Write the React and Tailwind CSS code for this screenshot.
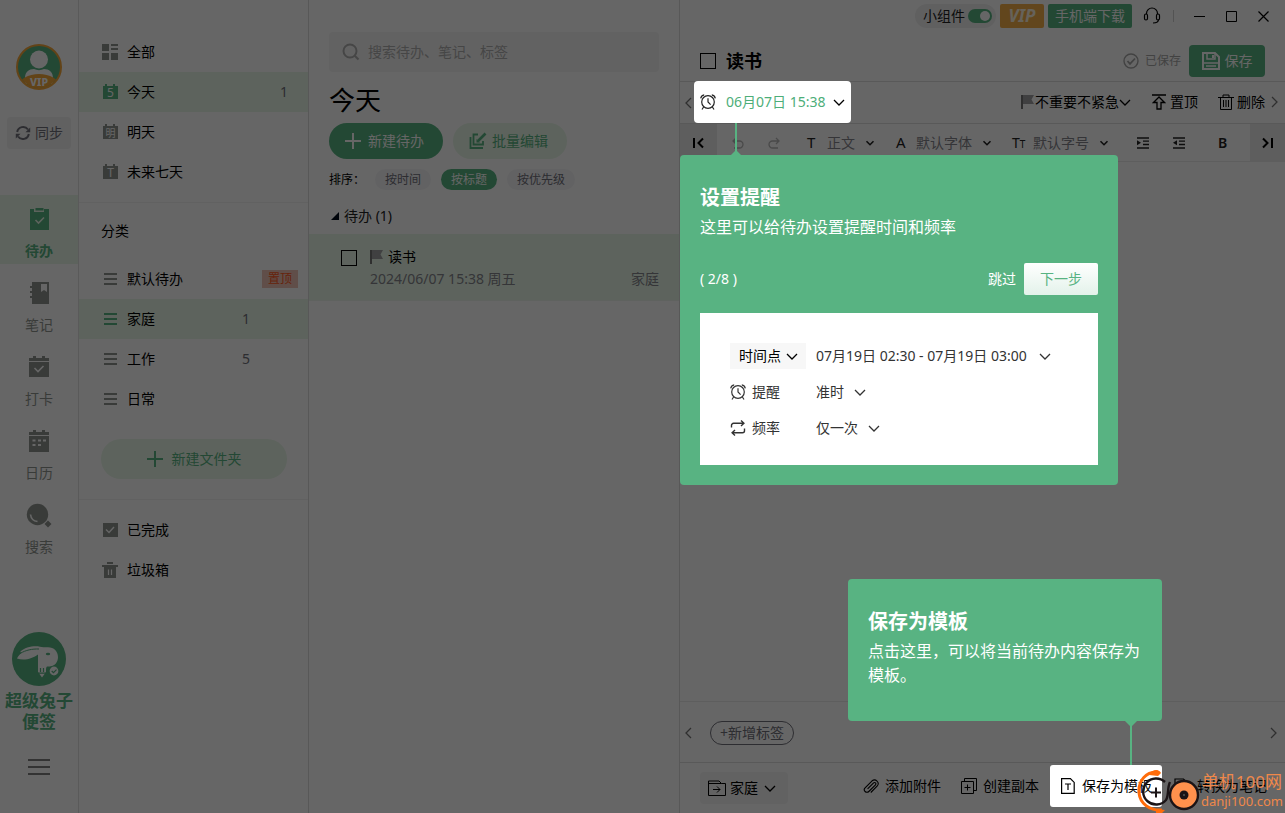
import React from "react";

const FONT = 'font-["Noto_Sans","Noto_Sans_CJK_SC",sans-serif]';

/* ---------- icons ---------- */

function Svg({ w, h, className = "", children, ...rest }) {
  return (
    <svg
      width={w}
      height={h}
      viewBox={`0 0 ${w} ${h}`}
      fill="none"
      aria-hidden="true"
      className={`shrink-0 ${className}`}
      {...rest}
    >
      {children}
    </svg>
  );
}

const Chevron = ({ className = "" }) => (
  <Svg w={12} h={12} className={className}>
    <path d="M1 4l5 5 5-5" stroke="currentColor" strokeWidth="1.3" />
  </Svg>
);

const SmallChevron = ({ className = "" }) => (
  <Svg w={10} h={10} className={className}>
    <path d="M1.5 3.2L5 6.7l3.500-3.500" stroke="currentColor" strokeWidth="1.6" />
  </Svg>
);

const ArrowLeft = () => (
  <Svg w={7} h={12}>
    <path d="M6 1L1 6l5 5" stroke="currentColor" strokeWidth="1.300" />
  </Svg>
);

const ArrowRight = () => (
  <Svg w={7} h={12}>
    <path d="M1 1l5 5-5 5" stroke="currentColor" strokeWidth="1.300" />
  </Svg>
);

const Plus = () => (
  <Svg w={16} h={16}>
    <path d="M8 0v16M0 8h16" stroke="currentColor" strokeWidth="2" />
  </Svg>
);

const Flag = () => (
  <Svg w={14} h={14}>
    <path d="M0 0h2v14H0z" fill="#777" />
    <path d="M2 0h11l-2.500 4.500L13 9H2z" fill="#a0a0a4" />
  </Svg>
);

const Alarm = () => (
  <Svg w={16} h={16} stroke="currentColor">
    <circle cx="8" cy="8" r="6.300" strokeWidth="1.200" />
    <path d="M8 4.200V8l2.600 2.600" strokeWidth="1.200" />
    <path d="M.7 4.300C1 2.300 2.200 1 4.200.8M15.300 4.300C15 2.300 13.800 1 11.800.8M3.600 13L2 15.500M12.400 13l1.600 2.500" strokeWidth="1.200" />
  </Svg>
);

const Repeat = () => (
  <Svg w={16} h={16} stroke="currentColor" strokeWidth="1.400">
    <path d="M1.500 7.500V5.300a2 2 0 012-2h10.300M11 .6l2.900 2.700L11 6M14.500 8.500v2.200a2 2 0 01-2 2H2.200M5 10l-2.900 2.700L5 15.400" />
  </Svg>
);

const Avatar = () => (
  <Svg w={46} h={46}>
    <defs>
      <clipPath id="avatar-clip">
        <circle cx="23" cy="23" r="21" />
      </clipPath>
    </defs>
    <circle cx="23" cy="23" r="22" fill="#58b382" stroke="#f6a83a" strokeWidth="2" />
    <g clipPath="url(#avatar-clip)">
      <circle cx="23" cy="15.500" r="9" fill="#fff" />
      <path d="M9 40v-6c0-6 4-9 9-9 3 1.500 7 1.500 10 0 5 0 9 3 9 9v6z" fill="#fff" />
      <ellipse cx="23" cy="42" rx="20" ry="12" fill="#f6a83a" />
    </g>
    <text x="23" y="41.500" textAnchor="middle" fill="#fff" fontSize="10.500" fontWeight="800" fontFamily="Noto Sans, sans-serif">
      VIP
    </text>
  </Svg>
);

const Sync = () => (
  <Svg w={16} h={16}>
    <path d="M2.200 7A6 6 0 0113 4.500M13.800 9A6 6 0 013 11.500" stroke="currentColor" strokeWidth="2" />
    <path d="M15.200 2.500v4.700h-4.700zM.8 13.500V8.800h4.700z" fill="currentColor" />
  </Svg>
);

const RailTodo = () => (
  <Svg w={20} h={24}>
    <path d="M1 2h4v3h10V2h5v21H1z" fill="currentColor" />
    <path d="M6.500 1h8v2.500h-8z" fill="currentColor" />
    <path d="M6.500 13l3 3 5.500-5.500" stroke="#e8f8e8" strokeWidth="1.600" />
  </Svg>
);

const RailNote = () => (
  <Svg w={20} h={24}>
    <path d="M3 1h17v22H3z" fill="currentColor" />
    <path d="M1 5h3v2H1zM1 10h3v2H1zM1 15h3v2H1z" fill="currentColor" />
    <path d="M12 3h6v8l-3-2-3 2z" fill="#fff" />
  </Svg>
);

const RailCheckin = () => (
  <Svg w={20} h={24}>
    <path d="M0 3h4V1h3v2h6V1h3v2h4v3H0zM0 7h20v15H0z" fill="currentColor" />
    <path d="M5.500 13l3.500 3.500 5.500-5.500" stroke="#fff" strokeWidth="1.600" />
  </Svg>
);

const RailCalendar = () => (
  <Svg w={20} h={24}>
    <path d="M0 3h4V1h3v2h6V1h3v2h4v3H0zM0 7h20v16H0z" fill="currentColor" />
    <path d="M3.500 10.500h3v2h-3zM9 10.500h3v2H9zM14 10.500h3v2h-3zM3.500 15h3v2h-3zM9 15h3v2H9z" fill="#fff" />
  </Svg>
);

const RailSearch = () => (
  <Svg w={26} h={26}>
    <circle cx="11.500" cy="11.500" r="10.700" fill="currentColor" />
    <path d="M22 17.500l3.500 3.500-3.500 3.500-3.500-3.500z" fill="currentColor" />
    <path d="M4.500 11.500c.5 4 3 6.500 7 7" stroke="#fff" strokeWidth="1.600" />
  </Svg>
);

const RabbitLogo = () => (
  <Svg w={54} h={54}>
    <circle cx="27" cy="27" r="27" fill="#58b382" />
    <path
      d="M5 26.500C6 24 8 22.200 10 20.500c-1 .2-2-.2-1.500-1C13 15.500 21 13.500 28 14.700c3 .5 5 .7 8 .6 6 0 10 4 10 10 0 5-3.500 9-8 9.300h-3c-1 1-1 2-1 5.400l-4 5.500-4-5.500V22.500c-5 4-14 6.500-21 4z"
      fill="#fff"
    />
    <path d="M8 21.500c6-3.500 12-4.700 19-4.500" stroke="#58b382" strokeWidth="1" />
    <path d="M28.500 36v4M31.500 36v4M26 41.200h8" stroke="#58b382" strokeWidth="1.200" />
    <ellipse cx="36" cy="22" rx="2.200" ry="1.200" fill="#58b382" />
    <circle cx="42" cy="39" r="5" fill="#fff" stroke="#58b382" strokeWidth="1.200" />
    <path d="M39.700 39l1.800 1.700 3-3" stroke="#58b382" strokeWidth="1.200" />
  </Svg>
);

const Menu = () => (
  <Svg w={22} h={16}>
    <path d="M0 1h22M0 8h22M0 15h22" stroke="#808080" strokeWidth="2" />
  </Svg>
);

const AllIcon = () => (
  <Svg w={16} h={16} fill="currentColor">
    <path d="M0 0h7v7H0zM0 9h7v7H0zM9 9h7v7H9zM9 0h7v2H9zM9 4h7v2H9z" fill="currentColor" />
  </Svg>
);

const DayIcon = ({ label, size }) => (
  <Svg w={16} h={16}>
    <path d="M1 2h2V0h2v2h6V0h2v2h3v13H1z" fill="currentColor" />
    <text x="8.500" y="12.500" textAnchor="middle" fontSize={size} fill="#fff" fontFamily="Noto Sans, Noto Sans CJK SC, sans-serif">
      {label}
    </text>
  </Svg>
);

const Lines = () => (
  <Svg w={16} h={16}>
    <path d="M2 3h13M2 8h13M2 13h13" stroke="currentColor" strokeWidth="2" />
  </Svg>
);

const DoneIcon = () => (
  <Svg w={16} h={16}>
    <path d="M1 1h15v14H1z" fill="currentColor" />
    <path d="M4 7.500l3 3 5-5.500" stroke="#fff" strokeWidth="1.400" />
  </Svg>
);

const BinIcon = () => (
  <Svg w={16} h={16}>
    <path d="M5 0h6v2H5zM0 3h16v2H0zM2 5h12v11H2z" fill="currentColor" />
    <path d="M6.500 7.500v5.500M9.500 7.500v5.500" stroke="#fff" strokeWidth="1.200" />
  </Svg>
);

const SearchIcon = () => (
  <Svg w={18} h={18}>
    <circle cx="8" cy="8" r="6.500" stroke="currentColor" strokeWidth="2" />
    <path d="M12.500 12.500l4 4" stroke="currentColor" strokeWidth="2.200" />
  </Svg>
);

const EditIcon = () => (
  <Svg w={18} h={18}>
    <path d="M9 2.500H4.500V12.500H14V9" stroke="currentColor" strokeWidth="1.800" />
    <path d="M1.500 5v11H14" stroke="currentColor" strokeWidth="1.800" />
    <path d="M16.500 1.500L9 9" stroke="currentColor" strokeWidth="2.600" />
    <path d="M7.500 7v3.500H11z" fill="currentColor" />
  </Svg>
);

const Headset = () => (
  <Svg w={18} h={18} stroke="currentColor" strokeWidth="1.200">
    <path d="M3.500 7V6.500a5.500 5.500 0 0111 0V7M15.500 12.500c0 2.500-2 3.500-5.500 3.500" />
    <rect x="1.500" y="7" width="3" height="6" rx="1.500" />
    <rect x="13.500" y="7" width="3" height="6" rx="1.500" />
  </Svg>
);

const SavedIcon = () => (
  <Svg w={16} h={16} stroke="currentColor" strokeWidth="1.400">
    <circle cx="8" cy="8" r="7" />
    <path d="M4.500 8l2.500 2.800 5-5.300" strokeWidth="1.800" />
  </Svg>
);

const SaveIcon = () => (
  <Svg w={18} h={18}>
    <path d="M1 1h12l4 4v12H1z" stroke="currentColor" strokeWidth="2" />
    <path d="M5 1.500V7h8V1.500M1 11h16M4 14h10" stroke="currentColor" strokeWidth="1.500" />
    <path d="M10 3h2v3h-2z" fill="currentColor" />
  </Svg>
);

const PinTop = () => (
  <Svg w={14} h={16} stroke="currentColor" strokeWidth="1.300">
    <path d="M0 1h14M7 3L1.500 8.500H5V15h4V8.500h3.500z" />
  </Svg>
);

const TrashOutline = () => (
  <Svg w={16} h={16} stroke="currentColor" strokeWidth="1">
    <path d="M0 3.500h16M5 3.500V1h6v2.500M2.500 3.500v12h11v-12M5.500 6v7M8 6v7M10.500 6v7" />
  </Svg>
);

const Undo = () => (
  <Svg w={12} h={12} stroke="currentColor" strokeWidth="1.300">
    <path d="M1 4h6.500a3.500 3.500 0 010 7H2M4 1L1 4l3 3" />
  </Svg>
);

const Redo = () => (
  <Svg w={12} h={12} stroke="currentColor" strokeWidth="1.300">
    <path d="M11 4H4.500a3.500 3.500 0 000 7H10M8 1l3 3-3 3" />
  </Svg>
);

const Indent = ({ left }) => (
  <Svg w={12} h={12}>
    <path d="M0 1h12M6 4.200h6M6 7.500h6M0 11h12" stroke="currentColor" strokeWidth="1.300" />
    <path d={left ? "M4 3.300v5L0 5.800z" : "M0 3.300v5l4-2.500z"} fill="currentColor" />
  </Svg>
);

const CollapseLeft = () => (
  <Svg w={11} h={12} stroke="currentColor" strokeWidth="2">
    <path d="M1 1v10M10 1.500L5.500 6l4.500 4.500" />
  </Svg>
);

const CollapseRight = () => (
  <Svg w={11} h={12} stroke="currentColor" strokeWidth="2">
    <path d="M10 1v10M1 1.500L5.500 6 1 10.500" />
  </Svg>
);

const FolderMove = () => (
  <Svg w={18} h={16} stroke="currentColor" strokeWidth="1">
    <path d="M.5 15.500V1h10.500l2.500 2.500h4v12zM.5 3.500h13M5 9.500h7M9 6.500l3 3-3 3" />
  </Svg>
);

const Clip = () => (
  <Svg w={16} h={16} stroke="currentColor" strokeWidth="1.100">
    <path d="M5 10.500l6-6a1.300 1.300 0 011.900 1.900l-6.700 6.700a2.600 2.600 0 01-3.700-3.700l7-7a3.700 3.700 0 015.200 5.200l-6.500 6.500" transform="translate(-.4 .4)" />
  </Svg>
);

const Copy = () => (
  <Svg w={16} h={16} stroke="currentColor" strokeWidth="1">
    <path d="M.5 3.500h12v12H.5zM3.500 3.500v-3h12v12h-3M6.500 6.500v6M3.500 9.500h6" />
  </Svg>
);

const Template = () => (
  <Svg w={14} h={16} stroke="currentColor" strokeWidth="1.200">
    <path d="M.6.6h8.800l3.800 3.800v11H.6zM4 6h6M7 6v6" />
  </Svg>
);

const Convert = () => (
  <Svg w={16} h={16} stroke="currentColor" strokeWidth="1.200">
    <path d="M1 12V1h8.500L13 4.500V7M4 6h5M4 9h3M15 11H7M9.500 8.500L7 11l2.500 2.500" />
  </Svg>
);

/* ---------- shared controls ---------- */

function Select({ label, value, width, className = "", chevron }) {
  return (
    <label className={`flex items-center ${className}`}>
      <select aria-label={label} defaultValue={value} className={`appearance-none bg-transparent p-0 outline-none ${width}`}>
        <option>{value}</option>
      </select>
      {chevron || <Chevron />}
    </label>
  );
}

/* ---------- left rail ---------- */

const RAIL = [
  { label: "待办", Icon: RailTodo, active: true },
  { label: "笔记", Icon: RailNote },
  { label: "打卡", Icon: RailCheckin },
  { label: "日历", Icon: RailCalendar },
  { label: "搜索", Icon: RailSearch },
];

function Rail() {
  return (
    <aside className="flex w-[79px] shrink-0 flex-col items-center border-r border-[#e0e0e0] pt-11 pb-[38px]">
      <button type="button" aria-label="账户">
        <Avatar />
      </button>
      <button type="button" className="mt-[27px] flex h-8 w-16 items-center justify-center gap-1 rounded bg-[#f2f2f2] text-[#70707a]">
        <Sync />
        同步
      </button>
      <nav className="mt-[46px] flex w-full flex-col gap-[5px]">
        {RAIL.map(({ label, Icon, active }) => (
          <button
            type="button"
            key={label}
            className={`flex h-[69px] w-full flex-col items-center justify-between pt-3 pb-[3px] ${
              active ? "bg-[#e8f8e8] font-bold text-[#58b382]" : "text-[#909590]"
            }`}
          >
            <Icon />
            <span>{label}</span>
          </button>
        ))}
      </nav>
      <div className="mt-auto flex flex-col items-center">
        <RabbitLogo />
        <p className="mt-1 text-center text-[17px] leading-[21px] font-bold text-[#58b382]">
          超级兔子
          <br />
          便签
        </p>
        <button type="button" aria-label="菜单" className="mt-[27px]">
          <Menu />
        </button>
      </div>
    </aside>
  );
}

/* ---------- folder sidebar ---------- */

function SideItem({ icon, label, active, activeIcon, children }) {
  return (
    <button
      type="button"
      className={`flex h-10 w-full items-center gap-[9px] pr-[10px] pl-[23px] ${active ? "bg-[#e8f8e8]" : ""}`}
    >
      <span className={activeIcon ? "text-[#58b382]" : "text-[#909590]"}>{icon}</span>
      <span>{label}</span>
      {children}
    </button>
  );
}

function Sidebar() {
  return (
    <nav className="w-[230px] shrink-0 border-r border-[#dcdcdc] pt-8">
      <SideItem icon={<AllIcon />} label="全部" />
      <SideItem icon={<DayIcon label="5" size={12} />} label="今天" active activeIcon>
        <span className="mr-[10px] ml-auto text-[#70707a]">1</span>
      </SideItem>
      <SideItem icon={<DayIcon label="明" size={10} />} label="明天" />
      <SideItem icon={<DayIcon label="T" size={12} />} label="未来七天" />
      <h2 className="mt-[10px] border-t border-[#f2f2f2] pt-[18px] pb-[18px] pl-[22px] leading-5">分类</h2>
      <SideItem icon={<Lines />} label="默认待办">
        <span className="ml-auto flex h-[18px] w-9 items-center justify-center bg-[#efc4b6] text-xs text-[#ff5722]">置顶</span>
      </SideItem>
      <SideItem icon={<Lines />} label="家庭" active activeIcon>
        <span className="mr-12 ml-auto text-[#70707a]">1</span>
      </SideItem>
      <SideItem icon={<Lines />} label="工作">
        <span className="mr-12 ml-auto text-[#70707a]">5</span>
      </SideItem>
      <SideItem icon={<Lines />} label="日常" />
      <div className="border-b border-[#f2f2f2] px-[22px] py-5 pr-[21px]">
        <button type="button" className="flex h-10 w-full items-center justify-center gap-[9px] rounded-full bg-[#e8f8e8] text-[#58b382]">
          <Plus />
          新建文件夹
        </button>
      </div>
      <div className="pt-[10px]">
        <SideItem icon={<DoneIcon />} label="已完成" />
        <SideItem icon={<BinIcon />} label="垃圾箱" />
      </div>
    </nav>
  );
}

/* ---------- todo list ---------- */

function TodoList() {
  return (
    <section className="w-[371px] shrink-0 border-r border-[#dcdcdc] pt-8">
      <div className="px-5">
        <label className="flex h-10 items-center gap-2 rounded bg-[#f5f5f5] px-[13px] text-[#b0b0b0]">
          <SearchIcon />
          <input
            type="search"
            aria-label="搜索"
            placeholder="搜索待办、笔记、标签"
            className="min-w-0 flex-1 bg-transparent outline-none placeholder:text-[#b0b0b0]"
          />
        </label>
        <h1 className="mt-3 text-[26px] leading-8">今天</h1>
        <div className="mt-[7px] flex gap-[10px]">
          <button type="button" className="flex h-9 w-[114px] items-center gap-[7px] rounded-full bg-[#58b382] pl-4 text-white">
            <Plus />
            新建待办
          </button>
          <button type="button" className="flex h-9 w-[114px] items-center gap-[5px] rounded-full bg-[#e8f8e8] pl-4 text-[#58b382]">
            <EditIcon />
            批量编辑
          </button>
        </div>
        <div className="mt-[10px] flex items-center gap-[10px] text-xs">
          <span className="w-9">排序：</span>
          <button type="button" className="h-[21px] rounded-full bg-[#f5f5f8] px-[10px] text-[#70707a]">按时间</button>
          <button type="button" className="h-[21px] rounded-full bg-[#58b382] px-[10px] text-white">按标题</button>
          <button type="button" className="h-[21px] rounded-full bg-[#f5f5f8] px-[10px] text-[#70707a]">按优先级</button>
        </div>
        <button type="button" className="mt-4 flex h-[20px] items-center gap-[5px] pl-[2px] leading-5 text-[#222]">
          <Svg w={8} h={8}>
            <path d="M8 0v8H0z" fill="#000c1a" />
          </Svg>
          待办 (1)
        </button>
      </div>
      <article className="mt-2 flex h-[67px] border-b border-[#eef4ee] bg-[#e8f8e8] pt-3 pr-5 pl-8">
        <input type="checkbox" aria-label="完成 读书" className="mt-1 size-4 appearance-none border border-black" />
        <div className="ml-[13px] flex-1">
          <h3 className="flex items-center gap-1 leading-[22px]">
            <Flag />
            读书
          </h3>
          <p className="flex justify-between leading-[22px] text-[#85858c]">
            <time>2024/06/07 15:38 周五</time>
            <span>家庭</span>
          </p>
        </div>
      </article>
    </section>
  );
}

/* ---------- tour ---------- */

function ReminderTour() {
  return (
    <div role="dialog" aria-label="设置提醒" className="absolute top-full left-[-14px] w-[438px] pt-8">
      <span className="absolute top-0 left-[55px] h-8 w-[2px] bg-[#58b382]" />
      <Svg w={12} h={6} className="absolute top-[27px] left-[50px]">
        <path d="M0 6l6-6 6 6z" fill="#58b382" />
      </Svg>
      <div className="rounded bg-[#58b382] px-5 pt-[29px] pb-5 text-white">
        <h2 className="text-xl leading-7 font-bold">设置提醒</h2>
        <p className="mt-[3px] text-base leading-6">这里可以给待办设置提醒时间和频率</p>
        <div className="mt-6 flex items-center">
          <span>( 2/8 )</span>
          <button type="button" className="ml-auto">跳过</button>
          <button
            type="button"
            className="ml-2 h-8 w-[74px] rounded-[2px] bg-linear-to-b from-white to-[#e3f2ea] text-[#58b382]"
          >
            下一步
          </button>
        </div>
        <div className="mt-[18px] grid grid-cols-[76px_1fr] gap-[10px] bg-white pt-[30px] pb-6 pl-[30px] leading-[26px] text-[#333]">
          <Select label="时间类型" value="时间点" width="w-[47px]" className="h-[26px] bg-[#f7f7f7] pl-[9px] text-black" />
          <Select label="时间范围" value="07月19日 02:30 - 07月19日 03:00" width="w-[223px]" />
          <span className="flex h-[26px] items-center gap-[6px]">
            <Alarm />
            提醒
          </span>
          <Select label="提醒" value="准时" width="w-[38px]" />
          <span className="flex h-[26px] items-center gap-[6px]">
            <Repeat />
            频率
          </span>
          <Select label="频率" value="仅一次" width="w-[52px]" />
        </div>
      </div>
    </div>
  );
}

function TemplateTour() {
  return (
    <div role="dialog" aria-label="保存为模板" className="absolute right-0 bottom-full w-[314px] pb-11">
      <div className="rounded bg-[#58b382] px-5 pt-[29px] pb-[34px] text-white">
        <h2 className="text-xl leading-7 font-bold">保存为模板</h2>
        <p className="mt-[3px] text-base leading-6">点击这里，可以将当前待办内容保存为模板。</p>
      </div>
      <Svg w={12} h={6} className="absolute right-[25px] bottom-[38px]">
        <path d="M0 0l6 6 6-6z" fill="#58b382" />
      </Svg>
      <span className="absolute right-[30px] bottom-0 h-11 w-[2px] bg-[#58b382]" />
    </div>
  );
}

/* ---------- editor ---------- */

function TitleBar() {
  return (
    <div className="flex h-8 items-center justify-end pr-4">
      <label className="flex h-6 items-center gap-[3px] rounded-full bg-[#f0f0f0] pr-1 pl-2 text-[#222]">
        小组件
        <input
          type="checkbox"
          role="switch"
          defaultChecked
          className="flex h-[14px] w-6 appearance-none items-center justify-end rounded-full bg-[#58b382] px-[2px] before:size-[10px] before:rounded-full before:bg-white"
        />
      </label>
      <button type="button" className="ml-1 h-6 w-11 rounded-[2px] bg-[#f6b04a] text-[17px] leading-6 font-bold text-[#fff6e0] italic">
        VIP
      </button>
      <button type="button" className="ml-1 h-6 w-[84px] rounded-[2px] bg-[#58b382] text-white">手机端下载</button>
      <button type="button" aria-label="客服" className="ml-[11px]">
        <Headset />
      </button>
      <span className="ml-3 h-3 w-px bg-[#d0d0d0]" />
      <button type="button" aria-label="最小化" className="ml-5">
        <Svg w={11} h={11}>
          <path d="M0 5.500h11" stroke="#000" />
        </Svg>
      </button>
      <button type="button" aria-label="最大化" className="ml-[21px]">
        <Svg w={11} h={11}>
          <path d="M.5.5h10v10H.5z" stroke="#000" />
        </Svg>
      </button>
      <button type="button" aria-label="关闭" className="ml-[21px]">
        <Svg w={11} h={11}>
          <path d="M.5.500l10 10M10.500.500l-10 10" stroke="#000" strokeWidth="1.200" />
        </Svg>
      </button>
    </div>
  );
}

function Editor() {
  return (
    <main className="flex min-w-0 flex-1 flex-col">
      <TitleBar />
      <header className="flex h-[50px] items-center border-b border-[#dedede] pt-2 pr-5 pl-5">
        <input type="checkbox" aria-label="完成" className="size-4 appearance-none border border-black" />
        <h2 className="ml-[10px] text-lg font-bold">读书</h2>
        <span className="ml-auto flex items-center gap-[6px] text-xs text-[#a6a6a6]">
          <SavedIcon />
          已保存
        </span>
        <button type="button" className="ml-2 flex h-8 w-[76px] items-center justify-center gap-[5px] rounded bg-[#58b382] text-white">
          <SaveIcon />
          保存
        </button>
      </header>

      <div className="flex h-[42px] items-center border-b border-[#dedede] pr-[7px] pl-[5px]">
        <button type="button" aria-label="向左" className="text-[#777]">
          <ArrowLeft />
        </button>
        <div className="relative z-20 ml-[2px] -mt-px h-[42px]">
          <Select
            label="提醒时间"
            value="06月07日 15:38"
            width="ml-[32px] w-[107px]"
            className="h-full w-[157px] rounded bg-white text-[#4dae79] [&>svg]:text-black"
          />
          <span className="pointer-events-none absolute top-[13px] left-[6px] text-[#222]">
            <Alarm />
          </span>
          <ReminderTour />
        </div>
        <div className="ml-auto flex items-center pb-[2px]">
          <Flag />
          <Select label="优先级" value="不重要不紧急" width="w-[84px]" />
          <button type="button" className="ml-[21px] flex items-center gap-1">
            <PinTop />
            置顶
          </button>
          <button type="button" className="ml-5 flex items-center gap-[3px]">
            <TrashOutline />
            删除
          </button>
          <button type="button" aria-label="向右" className="ml-[6px] text-[#777]">
            <ArrowRight />
          </button>
        </div>
      </div>

      <div className="flex h-[38px] items-center border-b border-[#ececec] text-[#222]">
        <button type="button" aria-label="收起左侧" className="flex h-full w-[37px] items-center justify-center bg-[#ececec] text-black">
          <CollapseLeft />
        </button>
        <button type="button" aria-label="撤销" className="ml-[15px] text-[#b8b8b8]">
          <Undo />
        </button>
        <button type="button" aria-label="重做" className="ml-6 text-[#b8b8b8]">
          <Redo />
        </button>
        <span className="ml-[27px] w-5 text-[15px]">T</span>
        <Select label="段落" value="正文" width="w-[38px] text-[#85858c]" chevron={<SmallChevron />} />
        <span className="ml-[21px] w-5 text-[15px]">A</span>
        <Select label="字体" value="默认字体" width="w-[66px] text-[#85858c]" chevron={<SmallChevron />} />
        <span className="ml-5 w-[21px] text-sm">
          T<span className="text-[10px]">T</span>
        </span>
        <Select label="字号" value="默认字号" width="w-[66px] text-[#85858c]" chevron={<SmallChevron />} />
        <button type="button" aria-label="增加缩进" className="ml-7">
          <Indent />
        </button>
        <button type="button" aria-label="减少缩进" className="ml-6">
          <Indent left />
        </button>
        <button type="button" aria-label="加粗" className="ml-[33px] font-semibold">
          B
        </button>
        <button type="button" aria-label="收起右侧" className="ml-auto flex h-full w-[35px] items-center justify-center bg-[#ececec] text-black">
          <CollapseRight />
        </button>
      </div>

      <textarea aria-label="正文内容" className="min-h-0 w-full flex-1 resize-none outline-none" />

      <div className="flex h-[61px] items-center border-t border-[#ececec] pt-[2px] pr-2 pl-[5px] text-[#777]">
        <button type="button" aria-label="向左">
          <ArrowLeft />
        </button>
        <button type="button" className="ml-[18px] h-6 w-[84px] rounded-full border border-[#70707a] leading-5 text-[#70707a]">
          +新增标签
        </button>
        <button type="button" aria-label="向右" className="ml-auto">
          <ArrowRight />
        </button>
      </div>

      <footer className="flex h-[51px] items-center border-t border-[#dedede] pr-[18px] pb-[5px] pl-5">
        <div className="mt-1 flex h-8 items-center gap-1 rounded bg-[#f5f5f5] px-2">
          <FolderMove />
          <Select label="文件夹" value="家庭" width="w-[34px]" className="pr-1" />
        </div>
        <button type="button" className="ml-auto flex items-center gap-[6px]">
          <Clip />
          添加附件
        </button>
        <button type="button" className="ml-5 flex items-center gap-[6px]">
          <Copy />
          创建副本
        </button>
        <div className="relative z-20 ml-[11px]">
          <button type="button" className="flex h-[42px] w-[112px] items-center gap-[7px] rounded-[3px] bg-white pl-[11px]">
            <Template />
            保存为模板
          </button>
          <TemplateTour />
        </div>
        <button type="button" className="ml-3 flex items-center gap-[7px]">
          <Convert />
          转换为笔记
        </button>
      </footer>
    </main>
  );
}

/* ---------- site mark ---------- */

function SiteMark() {
  return (
    <div className="pointer-events-none absolute right-[2px] bottom-0 z-30 flex items-center text-[#f0884a]">
      <Svg w={64} h={44}>
        <path d="M21 3C9 2 1 12 2 24c1 10 10 18 23 17" stroke="#ff6c0a" strokeWidth="3" />
        <path d="M12 6c3-5 9-7 12-2l-3 3zM19 40l9 1-3 3h-6z" fill="#ff6c0a" />
        <path d="M28 13A13 13 0 1029 31c3-4 1-12 4-18" stroke="#1b1416" strokeWidth="2.400" />
        <path d="M14 23.500h10M19 18.500v10" stroke="#1b1416" strokeWidth="2" />
        <circle cx="47" cy="26" r="14" fill="#ff914d" stroke="#1b1416" strokeWidth="2.400" />
        <circle cx="47" cy="26" r="4.500" fill="#1b1416" />
        <circle cx="47" cy="26" r="1" fill="#555" />
      </Svg>
      <p className="text-center">
        <span className="block text-[17px] leading-[21px]">单机100网</span>
        <span className="block text-[13px] leading-[19px]">danji100.com</span>
      </p>
    </div>
  );
}

export default function App() {
  return (
    <div className={`relative flex min-h-screen bg-white text-sm text-black ${FONT}`}>
      <Rail />
      <Sidebar />
      <TodoList />
      <Editor />
      <div className="absolute inset-0 z-10 bg-black/60" />
      <SiteMark />
    </div>
  );
}
